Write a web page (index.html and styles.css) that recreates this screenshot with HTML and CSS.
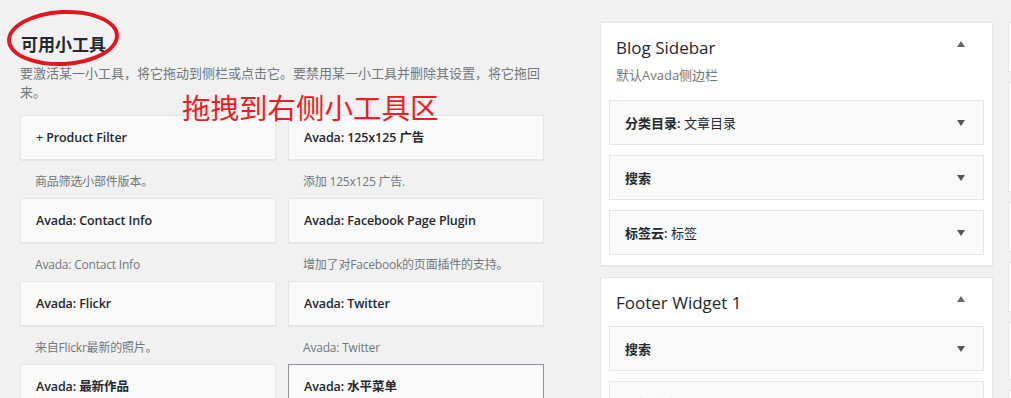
FILE: index.html
```html
<!DOCTYPE html>
<html lang="zh-CN">
<head>
    <meta charset="UTF-8">
    <meta name="viewport" content="width=device-width, initial-scale=1.0">
    <title>小工具</title>
    <link rel="stylesheet" href="styles.css">
</head>
<body>
    <div class="page">
        <section class="available">
            <h2 class="section-title">可用小工具</h2>
            <p class="section-desc">要激活某一小工具，将它拖动到侧栏或点击它。要禁用某一小工具并删除其设置，将它拖回来。</p>

            <div class="widget-grid">
                <div class="widget-item">
                    <div class="widget-card"><h3><span class="plus">+</span> Product Filter</h3></div>
                    <p class="widget-desc">商品筛选小部件版本。</p>
                </div>
                <div class="widget-item">
                    <div class="widget-card"><h3>Avada: 125x125 广告</h3></div>
                    <p class="widget-desc">添加 125x125 广告.</p>
                </div>
                <div class="widget-item">
                    <div class="widget-card"><h3>Avada: Contact Info</h3></div>
                    <p class="widget-desc">Avada: Contact Info</p>
                </div>
                <div class="widget-item">
                    <div class="widget-card"><h3>Avada: Facebook Page Plugin</h3></div>
                    <p class="widget-desc">增加了对Facebook的页面插件的支持。</p>
                </div>
                <div class="widget-item">
                    <div class="widget-card"><h3>Avada: Flickr</h3></div>
                    <p class="widget-desc">来自Flickr最新的照片。</p>
                </div>
                <div class="widget-item">
                    <div class="widget-card"><h3>Avada: Twitter</h3></div>
                    <p class="widget-desc">Avada: Twitter</p>
                </div>
                <div class="widget-item">
                    <div class="widget-card"><h3>Avada: 最新作品</h3></div>
                    <p class="widget-desc">&nbsp;</p>
                </div>
                <div class="widget-item">
                    <div class="widget-card hover"><h3>Avada: 水平菜单</h3></div>
                    <p class="widget-desc">&nbsp;</p>
                </div>
            </div>

            <!-- annotations drawn over the screenshot -->
            <div class="mark-ellipse"></div>
            <div class="mark-note">拖拽到右侧小工具区</div>
        </section>

        <section class="sidebars">
            <div class="sidebar-box">
                <div class="sidebar-head">
                    <h2>Blog Sidebar</h2>
                    <span class="arrow-up"></span>
                </div>
                <p class="sidebar-desc">默认Avada侧边栏</p>
                <div class="sidebar-widgets">
                    <div class="sidebar-widget"><h3>分类目录:<span class="in-title"> 文章目录</span></h3><span class="arrow-down"></span></div>
                    <div class="sidebar-widget"><h3>搜索</h3><span class="arrow-down"></span></div>
                    <div class="sidebar-widget"><h3>标签云:<span class="in-title"> 标签</span></h3><span class="arrow-down"></span></div>
                </div>
            </div>

            <div class="sidebar-box">
                <div class="sidebar-head">
                    <h2>Footer Widget 1</h2>
                    <span class="arrow-up"></span>
                </div>
                <div class="sidebar-widgets">
                    <div class="sidebar-widget"><h3>搜索</h3><span class="arrow-down"></span></div>
                    <div class="sidebar-widget"><h3>最新文章: 推荐</h3><span class="arrow-down"></span></div>
                </div>
            </div>
        </section>

        <section class="sidebars-more">
            <div class="more-box h50"></div>
            <div class="more-box h110"></div>
            <div class="more-box h50"></div>
            <div class="more-box h50"></div>
            <div class="more-box h58"></div>
            <div class="more-box h50"></div>
        </section>
    </div>
</body>
</html>
```

FILE: styles.css
```css
html, body {
    overflow: hidden;
}
body {
    margin: 0;
    background-color: #f1f1f1;
    color: #23282d;
    font-family: "Open Sans", "Noto Sans CJK SC", sans-serif;
    font-size: 13px;
}
h2, h3, p {
    margin: 0;
}
.page {
    display: flex;
    align-items: flex-start;
    padding: 22px 0 0 20px;
}

/* available widgets */
.available {
    position: relative;
    width: 524px;
    flex-shrink: 0;
}
.section-title {
    margin-top: 11px;
    font-size: 17px;
    line-height: 24px;
    font-weight: 700;
    padding-left: 1px;
}
.section-desc {
    margin-top: 7px;
    line-height: 19px;
    color: #72777c;
}
.widget-grid {
    display: grid;
    grid-template-columns: 256px 256px;
    column-gap: 12px;
    margin-top: 13px;
}
.widget-card {
    height: 43px;
    display: flex;
    align-items: center;
    padding: 0 15px;
    background-color: #fafafa;
    border: 1px solid #e5e5e5;
    box-shadow: 0 1px 1px rgba(0, 0, 0, 0.04);
}
.widget-card.hover {
    border-color: #8c8f94;
}
.widget-card h3 {
    font-size: 12.5px;
    font-weight: 600;
    line-height: 18px;
    letter-spacing: -0.1px;
}
.plus {
    font-weight: 400;
}
.widget-desc {
    padding: 12px 15px 7px;
    font-size: 12px;
    line-height: 19px;
    letter-spacing: -0.2px;
    color: #72777c;
}
.mark-ellipse {
    position: absolute;
    left: -13px;
    top: -12px;
    width: 104px;
    height: 48px;
    border: 4px solid #e3151f;
    border-radius: 50%;
    transform: rotate(-3deg);
}
.mark-note {
    position: absolute;
    left: 162px;
    top: 72px;
    font-size: 28.5px;
    line-height: 1;
    color: #ee1c25;
    white-space: nowrap;
}

/* sidebars */
.sidebars {
    width: 393px;
    flex-shrink: 0;
    margin-left: 56px;
    display: flex;
    flex-direction: column;
    gap: 11px;
}
.sidebar-box {
    background-color: #fff;
    border: 1px solid #e5e5e5;
    box-shadow: 0 1px 1px rgba(0, 0, 0, 0.04);
    padding: 0 8px 10px;
}
.sidebar-head {
    position: relative;
    padding: 14px 7px 0;
}
.sidebar-head h2 {
    font-size: 17px;
    font-weight: 400;
    line-height: 22px;
}
.arrow-up {
    position: absolute;
    right: 19px;
    top: 18px;
    border-left: 4px solid transparent;
    border-right: 4px solid transparent;
    border-bottom: 6px solid #646970;
}
.sidebar-desc {
    padding: 7px 7px 3px;
    line-height: 19px;
    color: #72777c;
}
.sidebar-widgets {
    display: flex;
    flex-direction: column;
    gap: 10px;
    padding-top: 12px;
}
.sidebar-widget {
    height: 43px;
    display: flex;
    align-items: center;
    justify-content: space-between;
    padding: 0 18px 0 15px;
    background-color: #fafafa;
    border: 1px solid #e5e5e5;
}
.sidebar-widget h3 {
    font-size: 13px;
    font-weight: 600;
    line-height: 18px;
}
.in-title {
    font-weight: 400;
}
.arrow-down {
    border-left: 4px solid transparent;
    border-right: 4px solid transparent;
    border-top: 6px solid #50575e;
}

.sidebars-more {
    margin-left: 15px;
    width: 390px;
    flex-shrink: 0;
    display: flex;
    flex-direction: column;
    gap: 10px;
}
.more-box {
    background-color: #fff;
    border: 1px solid #e5e5e5;
}
.h50 { height: 48px; }
.h58 { height: 56px; }
.h110 { height: 108px; }
```
